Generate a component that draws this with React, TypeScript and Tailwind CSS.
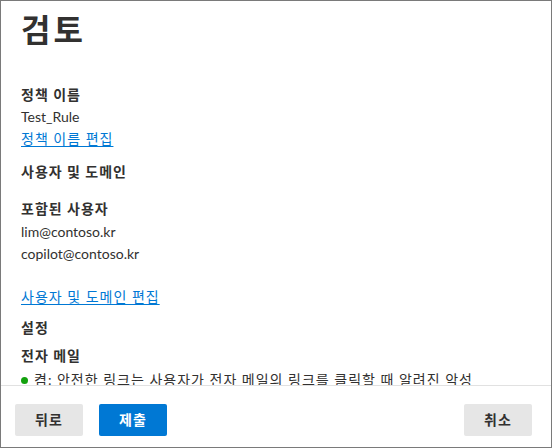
export default function App() {
  const font = {
    fontFamily: 'Lato, "Noto Sans CJK KR", sans-serif',
  };

  return (
    <div
      className="w-[552px] h-[448px] bg-white border border-[#7a7a7a] flex flex-col text-[#323130] overflow-hidden"
      style={font}
    >
      {/* Scrollable review content */}
      <div className="flex-1 overflow-hidden pl-5 pr-[60px]">
        <h1 className="mt-[9px] text-[32px] leading-[40px] font-bold tracking-[3px]">
          검토
        </h1>

        <div className="mt-[34px] text-sm leading-[22px]">
          <div className="font-bold tracking-[1px]">정책 이름</div>
          <div>Test_Rule</div>
          <a
            href="#"
            className="text-[#0078d4] underline underline-offset-2 tracking-[1px]"
          >
            정책 이름 편집
          </a>
        </div>

        <div className="mt-[11px] text-sm leading-[22px] font-bold tracking-[1px]">
          사용자 및 도메인
        </div>

        <div className="mt-[15px] text-sm leading-[22px]">
          <div className="font-bold tracking-[1px]">포함된 사용자</div>
          <div className="mt-px">lim@contoso.kr</div>
          <div>copilot@contoso.kr</div>
        </div>

        <div className="mt-[21px] text-sm leading-[22px]">
          <a
            href="#"
            className="text-[#0078d4] underline underline-offset-2 tracking-[1px]"
          >
            사용자 및 도메인 편집
          </a>
        </div>

        <div className="mt-[9px] text-sm leading-[22px] font-bold tracking-[1px]">
          설정
        </div>

        <div className="mt-[6px] text-sm leading-[22px] font-bold tracking-[1px]">
          전자 메일
        </div>

        <div className="mt-[2px] flex items-start gap-[6px] text-sm leading-[22px]">
          <span className="mt-[8px] w-[7px] h-[7px] rounded-full bg-[#13a10e] shrink-0" />
          <span className="tracking-[1px]">
            켬: 안전한 링크는 사용자가 전자 메일의 링크를 클릭할 때 알려진 악성
            URL로부터 사용자를 보호합니다.
          </span>
        </div>
      </div>

      {/* Footer */}
      <div className="h-[62px] shrink-0 border-t border-[#e1e1e1] pt-[18px] pl-[14px] pr-[19px] flex items-start">
        <button className="w-[68px] h-8 rounded-[2px] bg-[#e6e6e6] text-sm font-bold tracking-[1px] text-[#323130]">
          뒤로
        </button>
        <button className="ml-4 w-[68px] h-8 rounded-[2px] bg-[#0078d4] text-sm font-bold tracking-[1px] text-white">
          제출
        </button>
        <button className="ml-auto w-[68px] h-8 rounded-[2px] bg-[#e6e6e6] text-sm font-bold tracking-[1px] text-[#323130]">
          취소
        </button>
      </div>
    </div>
  );
}
